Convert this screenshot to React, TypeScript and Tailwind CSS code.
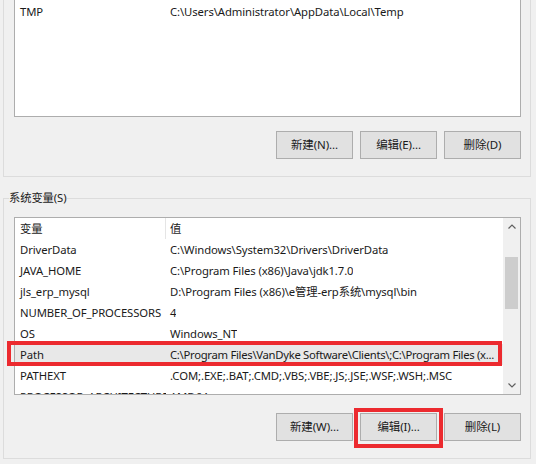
import React from "react";

const rows: [string, string][] = [
  ["DriverData", "C:\\Windows\\System32\\Drivers\\DriverData"],
  ["JAVA_HOME", "C:\\Program Files (x86)\\Java\\jdk1.7.0"],
  ["jls_erp_mysql", "D:\\Program Files (x86)\\e管理-erp系统\\mysql\\bin"],
  ["NUMBER_OF_PROCESSORS", "4"],
  ["OS", "Windows_NT"],
  ["Path", "C:\\Program Files\\VanDyke Software\\Clients\\;C:\\Program Files (x..."],
  ["PATHEXT", ".COM;.EXE;.BAT;.CMD;.VBS;.VBE;.JS;.JSE;.WSF;.WSH;.MSC"],
  ["PROCESSOR_ARCHITECTURE", "AMD64"],
];

function Btn({ label }: { label: string }) {
  return (
    <div className="w-[77px] h-[28px] bg-[#e1e1e1] border border-[#adadad] flex items-center justify-center text-[11.5px] text-[#1a1a1a]">
      {label}
    </div>
  );
}

function Row({ name, value, selected }: { name: string; value: string; selected?: boolean }) {
  return (
    <div className={`h-[21px] flex whitespace-nowrap leading-[21px] ${selected ? "bg-[#e8e8e8]" : ""}`}>
      <div className="w-[151px] shrink-0 pl-[5px] overflow-hidden">{name}</div>
      <div className={`pl-[4px] overflow-hidden ${selected ? "tracking-[-0.3px]" : ""}`}>{value}</div>
    </div>
  );
}

export default function App() {
  return (
    <div className="w-[536px] h-[464px] bg-[#f0f0f0] overflow-hidden font-['Noto_Sans','Noto_Sans_CJK_SC',sans-serif] text-[11.3px] tracking-[-0.1px] text-[#1a1a1a] leading-none">
      {/* User variables group (top, partially visible) */}
      <div className="ml-[3px] w-[528px] h-[177px] border-x border-b border-[#dcdcdc]">
        <div className="ml-[10px] w-[507px] h-[117px] bg-white border-x border-b border-[#adadad] pt-[1px]">
          <Row name="TMP" value="C:\Users\Administrator\AppData\Local\Temp" />
        </div>
        <div className="mt-[14px] flex justify-end gap-[7px] pr-[9px]">
          <Btn label="新建(N)..." />
          <Btn label="编辑(E)..." />
          <Btn label="删除(D)" />
        </div>
      </div>

      {/* System variables group */}
      <div className="mt-[21px] ml-[3px] w-[528px] h-[261px] border border-[#dcdcdc] relative">
        <div className="absolute left-[5px] top-[-9px] bg-[#f0f0f0] pr-[1px] leading-[16px]">系统变量(S)</div>
        <div className="mt-[18px] ml-[10px] w-[507px] h-[178px] border border-[#adadad] bg-white relative flex">
          <div className="flex-1 overflow-hidden">
            <div className="h-[21px] flex items-center">
              <div className="w-[151px] h-full shrink-0 pl-[5px] flex items-center border-r border-[#e5e5e5]">变量</div>
              <div className="pl-[4px]">值</div>
            </div>
            {rows.map(([n, v]) => (
              <Row key={n} name={n} value={v} selected={n === "Path"} />
            ))}
          </div>
          <div className="w-[17px] h-full bg-[#f0f0f0] flex flex-col items-center">
            <div className="h-[17px] w-full flex items-center justify-center">
              <svg width="8" height="5" viewBox="0 0 8 5">
                <path d="M0.5 4.5 L4 1 L7.5 4.5" fill="none" stroke="#606060" strokeWidth="1.2" />
              </svg>
            </div>
            <div className="mt-[22px] w-[13px] h-[52px] bg-[#cdcdcd]" />
            <div className="flex-1" />
            <div className="h-[17px] w-full flex items-center justify-center">
              <svg width="8" height="5" viewBox="0 0 8 5">
                <path d="M0.5 0.5 L4 4 L7.5 0.5" fill="none" stroke="#606060" strokeWidth="1.2" />
              </svg>
            </div>
          </div>
          <div className="absolute left-[-8px] top-[123px] w-[495px] h-[25px] border-4 border-[#ec2a2f]" />
        </div>
        <div className="mt-[18px] flex justify-end gap-[7px] pr-[9px]">
          <Btn label="新建(W)..." />
          <div className="relative">
            <Btn label="编辑(I)..." />
            <div className="absolute -left-[6px] -right-[6px] -top-[5px] -bottom-[7px] border-4 border-[#ec2a2f]" />
          </div>
          <Btn label="删除(L)" />
        </div>
      </div>
    </div>
  );
}
